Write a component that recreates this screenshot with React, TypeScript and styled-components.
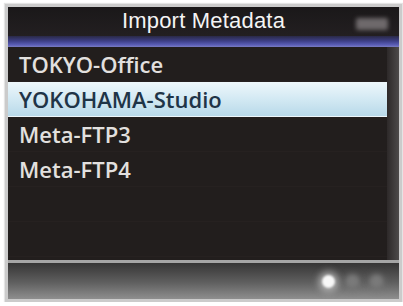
import styled, { createGlobalStyle } from 'styled-components'

const GlobalStyle = createGlobalStyle`
  html, body {
    margin: 0;
    padding: 0;
    background: #ffffff;
  }
`

const items = ['TOKYO-Office', 'YOKOHAMA-Studio', 'Meta-FTP3', 'Meta-FTP4', '', '']

const App = () => {
  return (
    <>
      <GlobalStyle />
      <Frame>
        <Header>
          <span />
          <Title>Import Metadata</Title>
          <StatusCell>
            <Status />
          </StatusCell>
        </Header>
        <Band />
        <Body>
          <List>
            {items.map((name, i) => (
              <Row key={i} selected={i === 1}>
                {name}
              </Row>
            ))}
          </List>
          <Scroll />
        </Body>
        <Divider />
        <Footer>
          <Dot active />
          <Dot />
          <Dot />
        </Footer>
      </Frame>
    </>
  )
}

const Frame = styled.div`
  display: flex;
  flex-direction: column;
  box-sizing: border-box;
  width: 397px;
  height: 298px;
  margin: 4px 0 0 5px;
  border: 3px solid #cbcbcb;
  background-color: #211d1d;
  box-shadow: 0 0 1px 1px #e4e4e4;
  overflow: hidden;
`

const Header = styled.div`
  display: grid;
  grid-template-columns: 1fr auto 1fr;
  align-items: center;
  height: 29px;
  background: linear-gradient(#1a1819, #231f21);
`

const Title = styled.div`
  font-family: 'Liberation Sans', Arial, sans-serif;
  font-size: 22px;
  color: #f4f4f4;
  letter-spacing: 0.2px;
  padding-bottom: 1px;
`

const StatusCell = styled.div`
  display: flex;
  justify-content: flex-end;
  padding-right: 11px;
`

const Status = styled.div`
  width: 32px;
  height: 12px;
  margin-top: 4px;
  border-radius: 2px;
  background-color: #6e696b;
  filter: blur(2px);
`

const Band = styled.div`
  height: 11px;
  background: linear-gradient(#2a2946 0%, #3d3f86 45%, #5a5db6 80%, #7a7cc2 100%);
`

const Body = styled.div`
  display: flex;
  flex: 1;
  min-height: 0;
`

const List = styled.div`
  display: flex;
  flex-direction: column;
  flex: 1;
  background-color: #221e1d;
`

const Row = styled.div<{ selected?: boolean }>`
  display: flex;
  align-items: center;
  height: 35px;
  padding-left: 11px;
  font-family: 'Open Sans', 'DejaVu Sans', sans-serif;
  font-weight: 600;
  font-size: 22px;
  color: ${({ selected }) => (selected ? '#1f3447' : '#e2e0df')};
  background: ${({ selected }) =>
    selected ? 'linear-gradient(#eef7fb, #d3e9f3 50%, #b8d9e9)' : 'transparent'};
  border-bottom: 1px solid ${({ selected }) => (selected ? 'transparent' : '#262120')};
  box-sizing: border-box;
  white-space: nowrap;
`

const Scroll = styled.div`
  width: 12px;
  background: linear-gradient(90deg, #2d2929, #403d3d 60%, #4d4a4a);
`

const Divider = styled.div`
  height: 3px;
  background-color: #a5a5a5;
`

const Footer = styled.div`
  display: flex;
  align-items: center;
  justify-content: flex-end;
  gap: 11px;
  height: 36px;
  padding-right: 16px;
  background: linear-gradient(#363535, #606060 55%, #8e8e8e);
`

const Dot = styled.div<{ active?: boolean }>`
  width: 13px;
  height: 13px;
  border-radius: 50%;
  background-color: ${({ active }) => (active ? '#f8f8f8' : '#7a7a7a')};
  filter: blur(${({ active }) => (active ? '1px' : '2px')});
  box-shadow: ${({ active }) =>
    active ? '0 0 6px 4px rgba(220, 220, 220, 0.55)' : '0 0 4px 2px rgba(120, 120, 120, 0.5)'};
`

export default App
